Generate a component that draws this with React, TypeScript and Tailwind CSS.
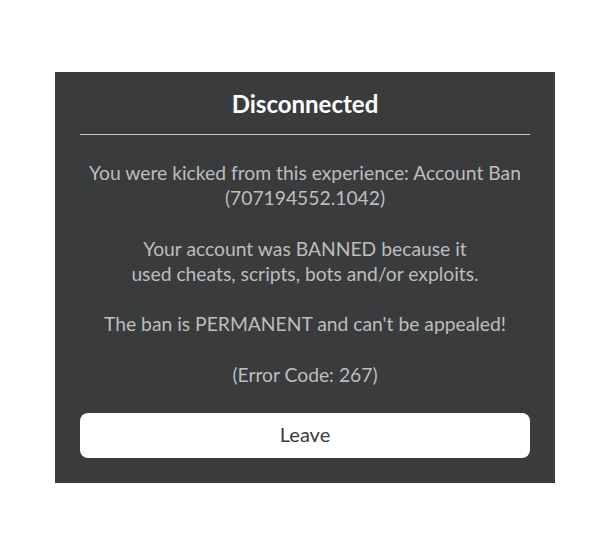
export default function App() {
  const message =
    "You were kicked from this experience: Account Ban\n(707194552.1042)\n\nYour account was BANNED because it\nused cheats, scripts, bots and/or exploits.\n\nThe ban is PERMANENT and can't be appealed!\n\n(Error Code: 267)";

  return (
    <div className="w-[602px] h-[553px] bg-white pt-[72px] pl-[55px] font-['Lato',sans-serif]">
      <div className="w-[500px] h-[411px] bg-[#393b3d] flex flex-col px-[25px] pt-[17px] pb-[25px]">
        <h1 className="text-center text-white text-[24px] leading-[30px] font-bold">Disconnected</h1>
        <div className="mt-[15px] h-px bg-[#c9c9c9]" />
        <p className="mt-[25px] text-center text-[#bdbebe] text-[19.3px] leading-[25.2px] whitespace-pre-line">
          {message}
        </p>
        <button className="mt-auto h-[45px] w-full bg-white rounded-[8px] text-[#393b3d] text-[20px] pb-[3px]">
          Leave
        </button>
      </div>
    </div>
  );
}
